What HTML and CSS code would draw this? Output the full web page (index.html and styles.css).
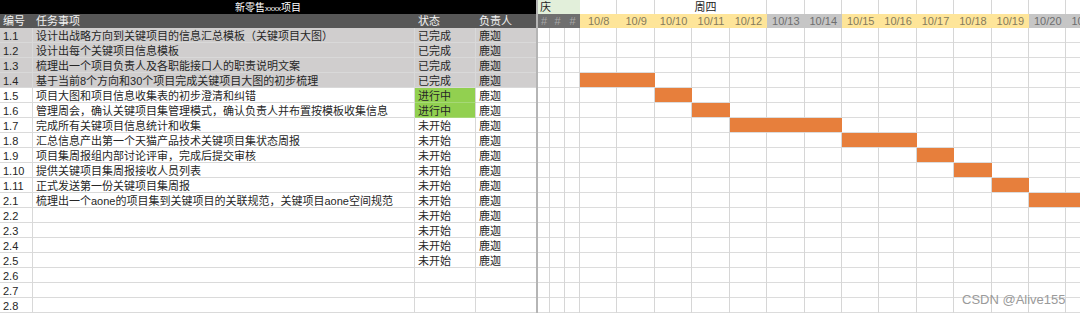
FILE: index.html
```html
<!DOCTYPE html>
<html lang="zh">
<head>
<meta charset="utf-8">
<title>新零售xxxx项目</title>
<link rel="stylesheet" href="styles.css">
</head>
<body>
<div class="sheet">
  <div class="tbl">
    <div class="title">新零售<span class="x">xxxx</span>项目</div>
    <div class="row head"><div class="c">编号</div><div class="c">任务事项</div><div class="c">状态</div><div class="c">负责人</div></div>
    <div class="row done"><div class="c">1.1</div><div class="c">设计出战略方向到关键项目的信息汇总模板（关键项目大图）</div><div class="c">已完成</div><div class="c">鹿迦</div></div>
    <div class="row done"><div class="c">1.2</div><div class="c">设计出每个关键项目信息模板</div><div class="c">已完成</div><div class="c">鹿迦</div></div>
    <div class="row done"><div class="c">1.3</div><div class="c">梳理出一个项目负责人及各职能接口人的职责说明文案</div><div class="c">已完成</div><div class="c">鹿迦</div></div>
    <div class="row done"><div class="c">1.4</div><div class="c">基于当前8个方向和30个项目完成关键项目大图的初步梳理</div><div class="c">已完成</div><div class="c">鹿迦</div></div>
    <div class="row"><div class="c">1.5</div><div class="c">项目大图和项目信息收集表的初步澄清和纠错</div><div class="c doing">进行中</div><div class="c">鹿迦</div></div>
    <div class="row"><div class="c">1.6</div><div class="c">管理周会，确认关键项目集管理模式，确认负责人并布置按模板收集信息</div><div class="c doing">进行中</div><div class="c">鹿迦</div></div>
    <div class="row"><div class="c">1.7</div><div class="c">完成所有关键项目信息统计和收集</div><div class="c">未开始</div><div class="c">鹿迦</div></div>
    <div class="row"><div class="c">1.8</div><div class="c">汇总信息产出第一个天猫产品技术关键项目集状态周报</div><div class="c">未开始</div><div class="c">鹿迦</div></div>
    <div class="row"><div class="c">1.9</div><div class="c">项目集周报组内部讨论评审，完成后提交审核</div><div class="c">未开始</div><div class="c">鹿迦</div></div>
    <div class="row"><div class="c">1.10</div><div class="c">提供关键项目集周报接收人员列表</div><div class="c">未开始</div><div class="c">鹿迦</div></div>
    <div class="row"><div class="c">1.11</div><div class="c">正式发送第一份关键项目集周报</div><div class="c">未开始</div><div class="c">鹿迦</div></div>
    <div class="row"><div class="c">2.1</div><div class="c">梳理出一个aone的项目集到关键项目的关联规范，关键项目aone空间规范</div><div class="c">未开始</div><div class="c">鹿迦</div></div>
    <div class="row"><div class="c">2.2</div><div class="c"></div><div class="c">未开始</div><div class="c">鹿迦</div></div>
    <div class="row"><div class="c">2.3</div><div class="c"></div><div class="c">未开始</div><div class="c">鹿迦</div></div>
    <div class="row"><div class="c">2.4</div><div class="c"></div><div class="c">未开始</div><div class="c">鹿迦</div></div>
    <div class="row"><div class="c">2.5</div><div class="c"></div><div class="c">未开始</div><div class="c">鹿迦</div></div>
    <div class="row"><div class="c">2.6</div><div class="c"></div><div class="c"></div><div class="c"></div></div>
    <div class="row"><div class="c">2.7</div><div class="c"></div><div class="c"></div><div class="c"></div></div>
    <div class="row"><div class="c">2.8</div><div class="c"></div><div class="c"></div><div class="c"></div></div>
  </div>

  <div class="gantt">
    <div class="g-top">
      <div class="gc holiday">庆</div>
      <div class="gc"></div><div class="gc"></div>
      <div class="gc week">周四</div>
      <div class="gc"></div><div class="gc"></div><div class="gc"></div><div class="gc"></div><div class="gc"></div><div class="gc"></div><div class="gc"></div><div class="gc"></div><div class="gc"></div>
    </div>
    <div class="g-head">
      <div class="hc hash">#</div><div class="hc hash">#</div><div class="hc hash">#</div>
      <div class="hc wd">10/8</div><div class="hc wd">10/9</div><div class="hc wd">10/10</div><div class="hc wd">10/11</div><div class="hc wd">10/12</div>
      <div class="hc we">10/13</div><div class="hc we">10/14</div>
      <div class="hc wd">10/15</div><div class="hc wd">10/16</div><div class="hc wd">10/17</div><div class="hc wd">10/18</div><div class="hc wd">10/19</div>
      <div class="hc we">10/20</div><div class="hc we">10/21</div>
    </div>
    <div class="g-body">
      <div class="lines">
        <div class="vl"></div><div class="vl"></div><div class="vl"></div><div class="vl"></div><div class="vl"></div><div class="vl"></div><div class="vl"></div><div class="vl"></div><div class="vl"></div><div class="vl"></div><div class="vl"></div><div class="vl"></div><div class="vl"></div><div class="vl"></div><div class="vl"></div><div class="vl"></div><div class="vl"></div>
      </div>
      <div class="bars">
        <div class="bar b1"></div>
        <div class="bar b2"></div>
        <div class="bar b3"></div>
        <div class="bar b4"></div>
        <div class="bar b5"></div>
        <div class="bar b6"></div>
        <div class="bar b7"></div>
        <div class="bar b8"></div>
        <div class="bar b9"></div>
      </div>
    </div>
  </div>
</div>
<div class="wm">CSDN @Alive155</div>
</body>
</html>
```
FILE: styles.css
```css
* { box-sizing: border-box; }
html, body {
  margin: 0;
  padding: 0;
  width: 1080px;
  height: 315px;
  overflow: hidden;
  background: #ffffff;
}
body {
  font-family: "Liberation Sans", "Noto Sans CJK SC", sans-serif;
  font-size: 11px;
  color: #262626;
  position: relative;
}
.sheet {
  display: flex;
  align-items: flex-start;
}

/* ---------- left table ---------- */
.tbl {
  width: 536px;
  flex: none;
}
.title {
  height: 14px;
  background: #000;
  color: #fff;
  font-family: "Noto Sans CJK SC", sans-serif;
  font-size: 10px;
  line-height: 14px;
  text-align: center;
}
.title .x {
  font-family: "Liberation Sans", sans-serif;
  font-size: 8px;
}
.row {
  display: grid;
  grid-template-columns: 33px 382px 61px 60px;
  height: 15px;
}
.row .c {
  height: 15px;
  padding: 1px 0 0 3px;
  line-height: 14px;
  white-space: nowrap;
  border-bottom: 1px solid #dadada;
  border-right: 1px solid #d8d8d8;
}
.row .c:last-child { border-right: none; }
.row.head {
  height: 14px;
  background: #575757;
  color: #f2f2f2;
}
.row.head .c {
  height: 14px;
  padding-top: 0;
  border: none;
}
.row.done { background: #d0cece; }
.row.done .c { border-color: #d9d9d9; }
.c.doing { background: #92d050; border-bottom-color: #a6d877; }

/* ---------- gantt ---------- */
.gantt {
  flex: 1;
  border-left: 2px solid #b5b5b5;
}
.g-top, .g-head, .lines, .bars {
  display: grid;
  grid-template-columns: 12px 15px 15px repeat(14, 37.43px);
}
.g-top { height: 14px; }
.gc {
  border-right: 1px solid #d6d6d6;
  line-height: 14px;
  white-space: nowrap;
}
.gc.holiday {
  grid-column: span 3;
  background: #e2efda;
  color: #222;
  padding-left: 2px;
  border-right: none;
  font-size: 11px;
}
.gc.week {
  grid-column: span 3;
  text-align: center;
  padding-right: 10px;
  color: #222;
}
.g-head { height: 14px; }
.hc {
  line-height: 14px;
  text-align: center;
  white-space: nowrap;
}
.hc.hash { background: #6f6f6f; color: #a8a8a8; }
.hc.wd { background: #fee599; color: #857b5c; }
.hc.we { background: #c6c6c6; color: #6e6e6e; }

.g-body {
  display: grid;
  height: 285px;
  background: repeating-linear-gradient(to bottom, transparent 0, transparent 14px, #dcdcdc 14px, #dcdcdc 15px);
}
.lines, .bars { grid-area: 1 / 1; }
.lines { height: 285px; }
.vl { border-right: 1px solid #d6d6d6; }
.bars { grid-template-rows: repeat(19, 15px); }
.bar { background: #e77f3c; margin-bottom: 1px; }
.b1 { grid-row: 4; grid-column: 4 / span 2; }
.b2 { grid-row: 5; grid-column: 6; }
.b3 { grid-row: 6; grid-column: 7; }
.b4 { grid-row: 7; grid-column: 8 / span 3; }
.b5 { grid-row: 8; grid-column: 11 / span 2; }
.b6 { grid-row: 9; grid-column: 13; }
.b7 { grid-row: 10; grid-column: 14; }
.b8 { grid-row: 11; grid-column: 15; }
.b9 { grid-row: 12; grid-column: 16 / span 2; }

/* ---------- watermark ---------- */
.wm {
  position: absolute;
  left: 962px;
  top: 292px;
  font-family: "Liberation Sans", sans-serif;
  font-size: 13px;
  color: #9a9a9a;
  white-space: nowrap;
}
```
